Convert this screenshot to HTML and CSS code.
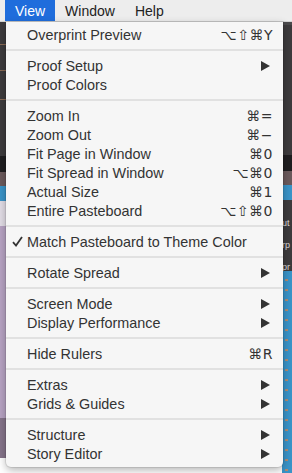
FILE: index.html
```html
<!DOCTYPE html>
<html lang="en">
<head>
  <meta charset="UTF-8">
  <title>View menu</title>
  <link rel="stylesheet" href="styles.css">
</head>
<body>
  <div class="screen">
    <nav class="menubar">
      <span class="mb-item active">View</span>
      <span class="mb-item">Window</span>
      <span class="mb-item">Help</span>
    </nav>

    <div class="desk">
      <div class="side left">
        <div class="band dark lines"></div>
        <div class="band black"></div>
        <div class="band brown"></div>
        <div class="band blue"></div>
        <div class="band pale"></div>
        <div class="band lilac"></div>
        <div class="band dusk"></div>
        <div class="band white"></div>
      </div>
      <div class="side right">
        <div class="band dark top"></div>
        <div class="band black"></div>
        <div class="band brown"></div>
        <div class="band blue"></div>
        <div class="band dark mid"><span>ut</span><span>rp</span><span>pr</span></div>
        <div class="band blue ruler"></div>
      </div>
    </div>

    <ul class="menu">
      <li class="item"><span class="label">Overprint Preview</span><span class="key">⌥⇧⌘Y</span></li>
      <li class="sep"></li>
      <li class="item"><span class="label">Proof Setup</span><i class="arrow"></i></li>
      <li class="item"><span class="label">Proof Colors</span></li>
      <li class="sep"></li>
      <li class="item"><span class="label">Zoom In</span><span class="key">⌘=</span></li>
      <li class="item"><span class="label">Zoom Out</span><span class="key">⌘−</span></li>
      <li class="item"><span class="label">Fit Page in Window</span><span class="key">⌘0</span></li>
      <li class="item"><span class="label">Fit Spread in Window</span><span class="key">⌥⌘0</span></li>
      <li class="item"><span class="label">Actual Size</span><span class="key">⌘1</span></li>
      <li class="item"><span class="label">Entire Pasteboard</span><span class="key">⌥⇧⌘0</span></li>
      <li class="sep"></li>
      <li class="item checked">
        <svg class="check" width="11" height="11" viewBox="0 0 11 11"><path d="M1 6.2 L4 9.5 L10 1" fill="none" stroke="#333" stroke-width="1.8"/></svg>
        <span class="label">Match Pasteboard to Theme Color</span>
      </li>
      <li class="sep"></li>
      <li class="item"><span class="label">Rotate Spread</span><i class="arrow"></i></li>
      <li class="sep"></li>
      <li class="item"><span class="label">Screen Mode</span><i class="arrow"></i></li>
      <li class="item"><span class="label">Display Performance</span><i class="arrow"></i></li>
      <li class="sep"></li>
      <li class="item"><span class="label">Hide Rulers</span><span class="key">⌘R</span></li>
      <li class="sep"></li>
      <li class="item"><span class="label">Extras</span><i class="arrow"></i></li>
      <li class="item"><span class="label">Grids &amp; Guides</span><i class="arrow"></i></li>
      <li class="sep"></li>
      <li class="item"><span class="label">Structure</span><i class="arrow"></i></li>
      <li class="item"><span class="label">Story Editor</span><i class="arrow"></i></li>
    </ul>
  </div>
</body>
</html>
```

FILE: styles.css
```css
:root {
  --bar: #ededed;
  --menu: #f6f6f6;
  --text: #333;
  --sep: #e1e1e1;
  --select: #1f6ddc;
}

* {
  box-sizing: border-box;
  margin: 0;
  padding: 0;
}

body {
  margin: 0;
  font-family: 'Liberation Sans', Arial, sans-serif;
  background: #fff;
}

.screen {
  position: relative;
  width: 292px;
  height: 473px;
  overflow: hidden;
}

/* top bar */
.menubar {
  display: flex;
  height: 22px;
  padding-left: 5px;
  background: var(--bar);
  border-bottom: 1px solid #d4d4d4;
}

.mb-item {
  display: flex;
  align-items: center;
  padding: 0 10px;
  font-size: 14px;
  color: #222;
}

.mb-item.active {
  background: var(--select);
  color: #fff;
}

/* app window peeking out behind the menu */
.desk {
  display: flex;
  justify-content: space-between;
  height: 451px;
}

.side {
  display: flex;
  flex-direction: column;
}

.side.left {
  width: 6px;
}

.side.right {
  width: 10px;
}

.band.dark { background: #3d3b3d; }
.band.black { background: #1f1e20; height: 16px; }
.band.brown { background: #6b5a5c; height: 14px; }
.band.blue { background: #3a94c8; height: 15px; }
.band.pale { background: #e2dde6; height: 25px; }
.band.lilac { background: #b7a3c3; height: 192px; }
.band.dusk { background: #85748a; height: 40px; }
.band.white { flex: 1; background: #fff; }

.left .band.lines {
  height: 134px;
  background:
    linear-gradient(#3d3b3d 22px, #8a6a55 22px, #8a6a55 23px, #3d3b3d 23px, #3d3b3d 48px, #8a6a55 48px, #8a6a55 49px, #3d3b3d 49px, #3d3b3d 77px, #8a6a55 77px, #8a6a55 78px, #3d3b3d 78px);
}

.right .band.top {
  height: 133px;
  border-top: 3px solid #4b4a4c;
}

.right .band.mid {
  display: flex;
  flex-direction: column;
  gap: 8px;
  height: 71px;
  padding-top: 16px;
  font-size: 9px;
  line-height: 14px;
  color: #ddd;
  overflow: hidden;
}

.right .band.ruler {
  flex: 1;
  background:
    repeating-linear-gradient(#3a94c8 0, #3a94c8 8px, #b38a6e 8px, #b38a6e 10px);
  background-size: 3px 100%;
  background-repeat: no-repeat;
  background-position: 3px 0;
  background-color: #3a94c8;
}

/* the open menu */
.menu {
  position: absolute;
  top: 22px;
  left: 6px;
  width: 277px;
  padding: 3px 0 4px;
  list-style: none;
  background: var(--menu);
  border-radius: 0 0 5px 5px;
  box-shadow: 0 3px 8px rgba(0, 0, 0, 0.3), 0 0 0 1px rgba(0, 0, 0, 0.08);
}

.item {
  display: flex;
  align-items: center;
  height: 19px;
  padding: 0 10px 0 21px;
  font-size: 14.4px;
  color: var(--text);
}

.item .label {
  flex: 1;
  white-space: nowrap;
}

.item .key {
  font-family: 'DejaVu Sans', sans-serif;
  font-size: 14px;
  letter-spacing: 0.5px;
}

.item .arrow {
  width: 0;
  height: 0;
  margin-right: 3px;
  border-top: 5px solid transparent;
  border-bottom: 5px solid transparent;
  border-left: 9px solid var(--text);
}

.item.checked {
  padding-left: 6px;
}

.check {
  margin-right: 4px;
}

.sep {
  height: 2px;
  margin: 5px 0;
  background: var(--sep);
}
```
